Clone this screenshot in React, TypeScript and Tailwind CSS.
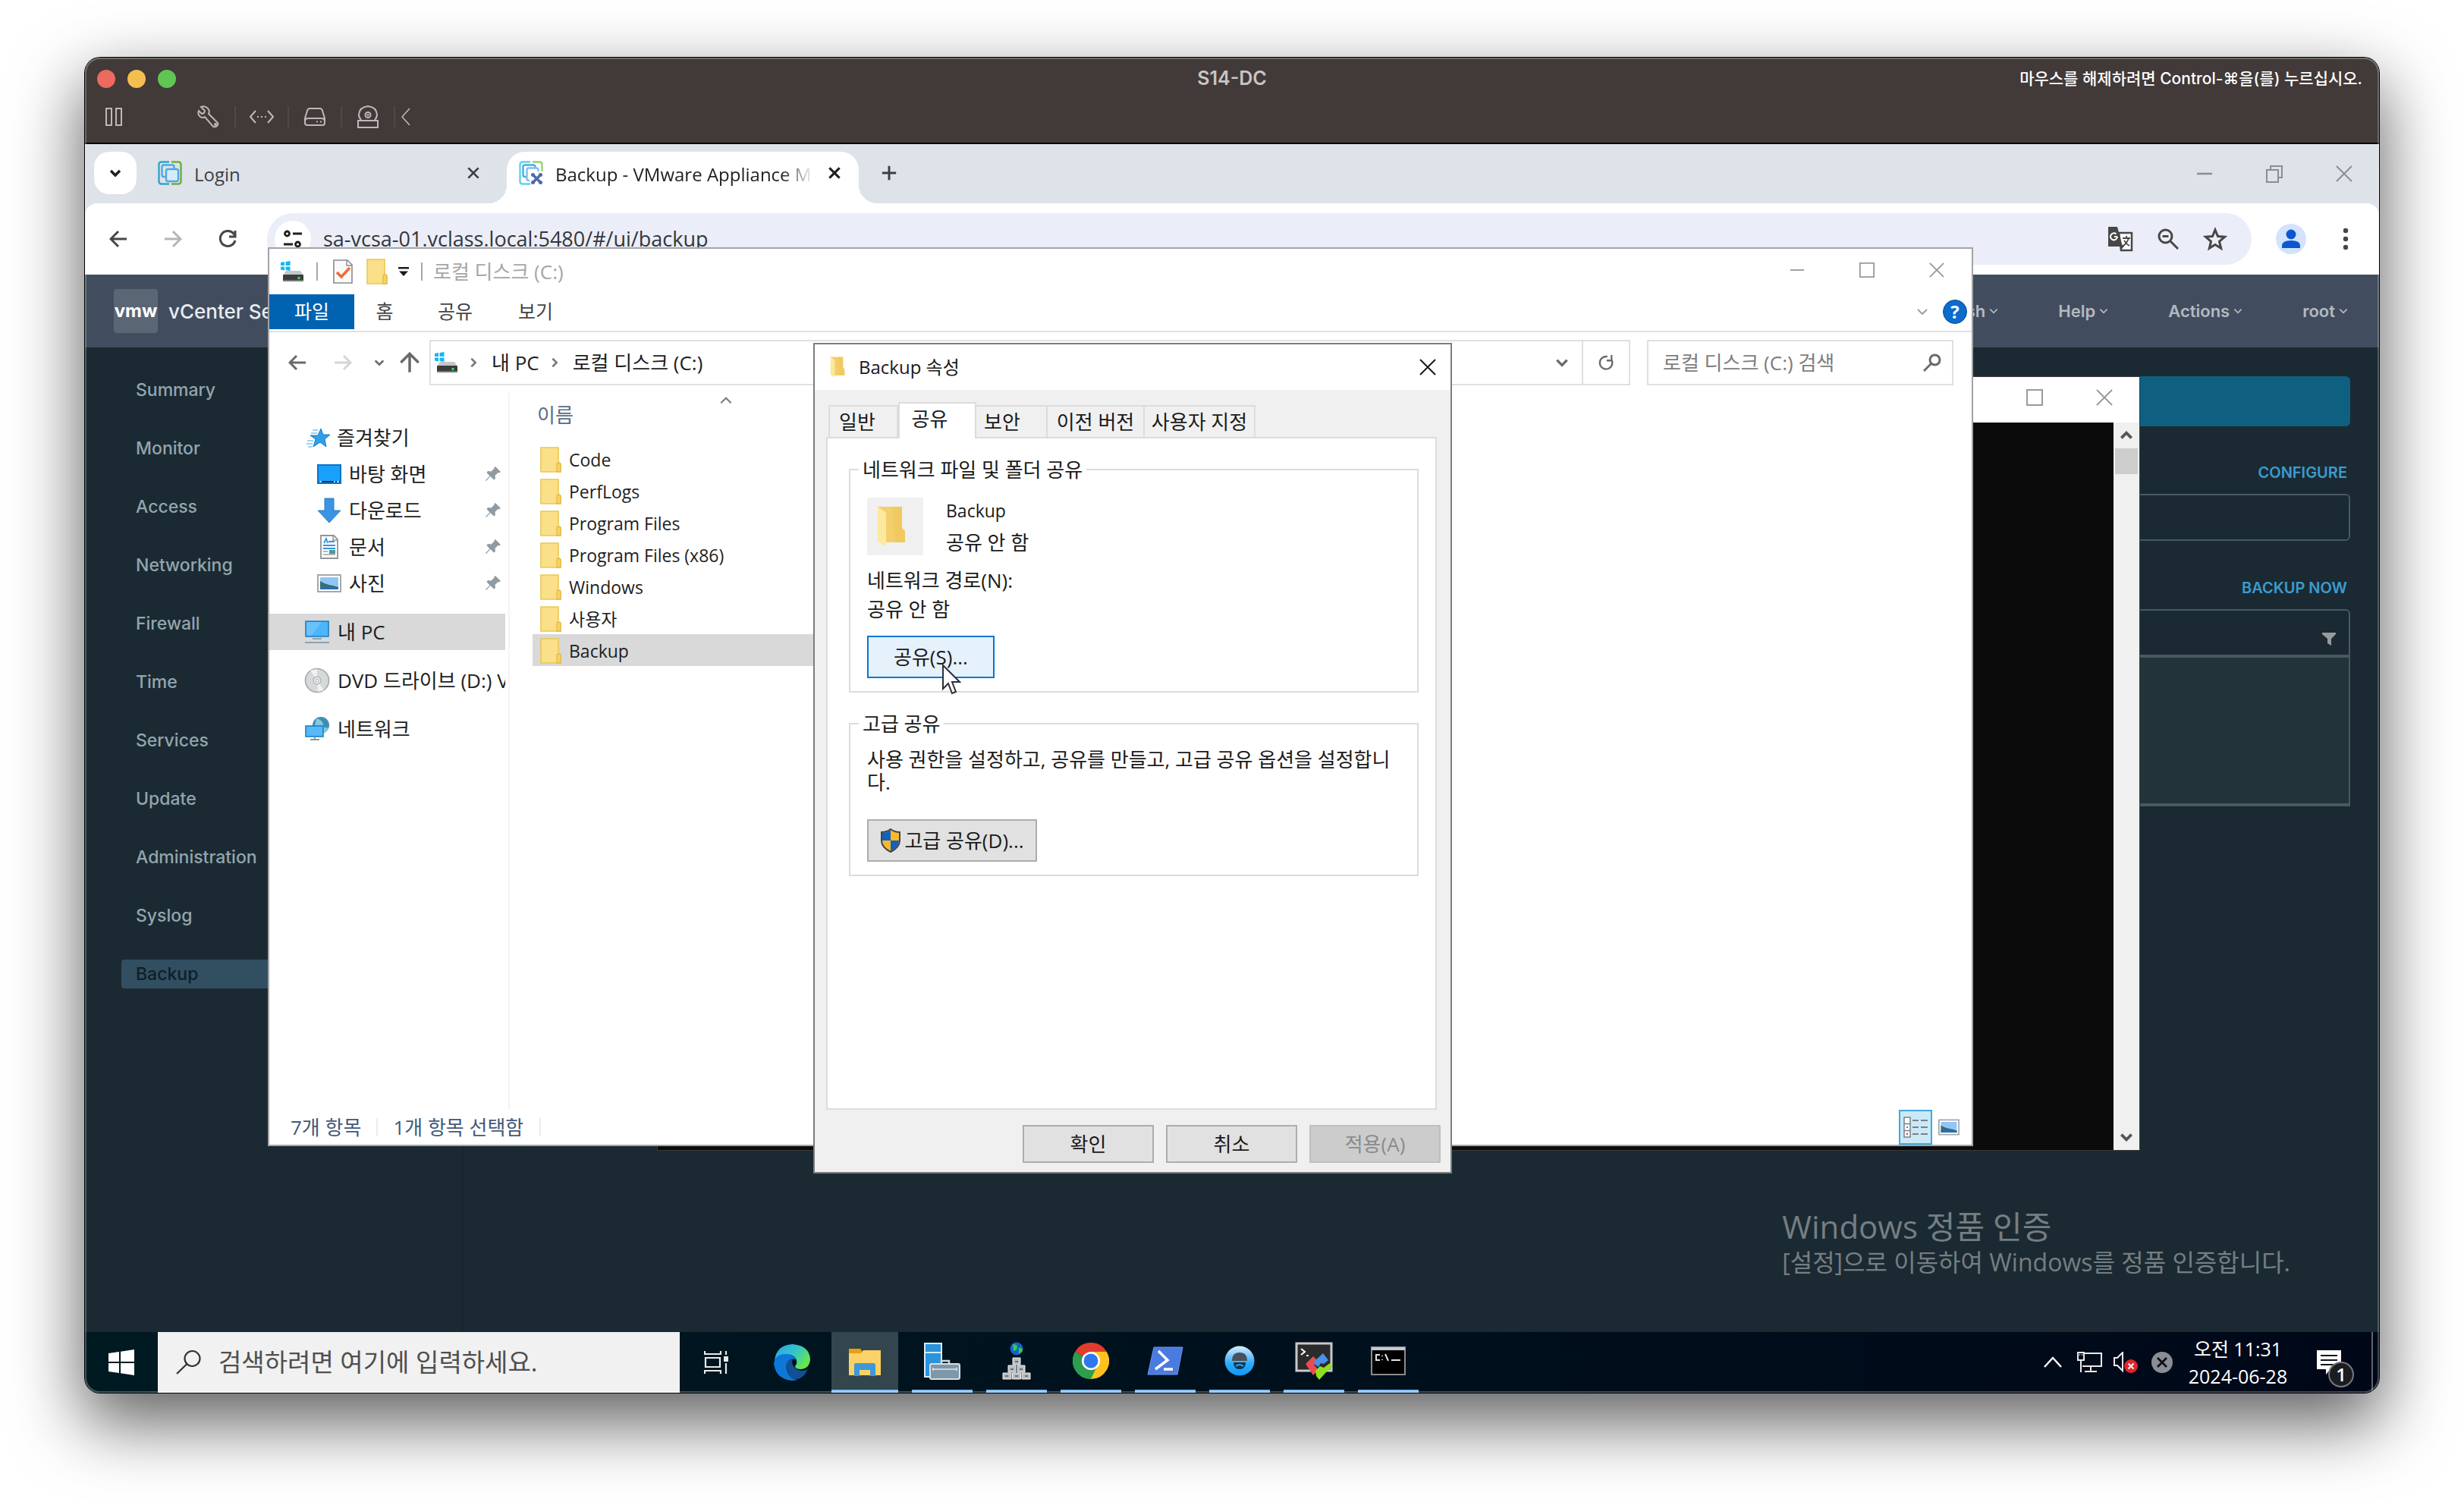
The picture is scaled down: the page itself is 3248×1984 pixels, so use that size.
import React from "react";
import type { ReactNode } from "react";

const UI = "font-['Open_Sans','Noto_Sans_CJK_KR',sans-serif]";
const CLARITY = "font-['Inter','Noto_Sans_CJK_KR',sans-serif]";

/* ---------- small line icons ---------- */

type LineProps = { d: string; size?: string; width?: number; className?: string; box?: string };

function Line({ d, size = "size-6", width = 2, className = "", box = "0 0 24 24" }: LineProps) {
  return (
    <svg
      viewBox={box}
      className={`${size} shrink-0 ${className}`}
      fill="none"
      stroke="currentColor"
      strokeWidth={width}
      aria-hidden="true"
    >
      <path d={d} />
    </svg>
  );
}

const CHEVRON_DOWN = "M4 8l8 8 8-8";
const CHEVRON_UP = "M4 16l8-8 8 8";
const CHEVRON_RIGHT = "M8 4l8 8-8 8";
const CROSS = "M2 2l20 20M22 2L2 22";
const SQUARE = "M2 2h20v20H2z";
const DASH = "M2 12h20";

/* ---------- coloured icons ---------- */

function FolderIcon({ className = "" }: { className?: string }) {
  return (
    <svg viewBox="0 0 28 34" className={`shrink-0 ${className}`} aria-hidden="true">
      <path d="M1 1h23v20l3 2v10H1z" fill="#fbe08a" stroke="#ecc850" strokeWidth="1.6" />
      <path d="M22 32V23.500q0-2.500 2.500-2.500t2.500 2.500V33h-5z" fill="#f7d367" stroke="#e5bb45" strokeWidth="1.400" />
    </svg>
  );
}

function OpenFolderIcon({ className = "" }: { className?: string }) {
  return (
    <svg viewBox="0 0 38 54" className={`shrink-0 ${className}`} aria-hidden="true">
      <path d="M1 1h32v28l4 4v15H10z" fill="#f3cf6b" />
      <path d="M20 1h13v28l4 4v15H24z" fill="#efc659" opacity=".6" />
      <path d="M1 1l10 7q1 1 1 3v36q0 6-2 6L1 46z" fill="#fde89f" />
    </svg>
  );
}

function DriveIcon() {
  return (
    <svg viewBox="0 0 32 28" className="h-7 w-8 shrink-0" aria-hidden="true">
      <path d="M1 2l5-1v5H1zM7.500 1l6-1v6h-6zM1 7.500h5v5l-5-1zM7.500 7.500h6V13l-6-1z" fill="#12b8f5" />
      <path d="M8 13h19l4 6H4z" fill="#c3c7ca" />
      <rect x="4" y="18" width="27" height="9" rx="1" fill="#3a3d3f" />
      <rect x="4" y="25" width="27" height="2" fill="#77797b" />
      <circle cx="25" cy="22.500" r="1.800" fill="#35e04a" />
    </svg>
  );
}

function CheckDocIcon() {
  return (
    <svg viewBox="0 0 26 32" className="h-8 w-[26px] shrink-0" aria-hidden="true">
      <path d="M1 1h18l6 6v24H1z" fill="#fafafa" stroke="#8b8b8b" strokeWidth="1.600" />
      <path d="M18 1v7h7" fill="none" stroke="#8b8b8b" strokeWidth="1.400" />
      <path d="M5 17l6 6L22 11" fill="none" stroke="#f26b2c" strokeWidth="3.500" />
    </svg>
  );
}

function StarQuickIcon() {
  return (
    <svg viewBox="0 0 32 28" className="h-7 w-8 shrink-0" aria-hidden="true">
      <path d="M19 2l3 8h9l-7 6 2 10-8-6-9 6 3-10-7-5h10z" fill="#2f9fe8" stroke="#1c7fc4" strokeWidth="1" />
      <path d="M8 4h7M6 8h8M1 18h8M0 22h8M2 26h6" stroke="#7cc8f5" strokeWidth="1.600" />
    </svg>
  );
}

function DesktopIcon() {
  return (
    <svg viewBox="0 0 32 26" className="h-[26px] w-8 shrink-0" aria-hidden="true">
      <rect x="1" y="1" width="30" height="24" fill="#19a0fb" stroke="#0b74c4" strokeWidth="2" />
      <path d="M2 23h28" stroke="#0a3f75" strokeWidth="2" />
      <path d="M3 23h3M22 23h2M26 23h3" stroke="#fff" strokeWidth="1.500" />
    </svg>
  );
}

function DownloadIcon() {
  return (
    <svg viewBox="0 0 32 34" className="h-[34px] w-8 shrink-0" aria-hidden="true">
      <path d="M10 1h12v16h9L16 33 1 17h9z" fill="#3a94e0" stroke="#2a7fca" strokeWidth="1" />
    </svg>
  );
}

function DocumentIcon() {
  return (
    <svg viewBox="0 0 32 32" className="size-8 shrink-0" aria-hidden="true">
      <path d="M5 1h17l5 5v25H5z" fill="#fff" stroke="#8f9599" strokeWidth="1.800" />
      <path d="M21 1v6h6" fill="none" stroke="#8f9599" strokeWidth="1.500" />
      <path d="M9 11l3-6 2 6M15 9h8M8 14h16M8 18h16" fill="none" stroke="#2c95dd" strokeWidth="1.800" />
      <path d="M8 22h6M8 26h16" stroke="#9aa0a4" strokeWidth="1.500" />
      <rect x="16" y="20" width="8" height="5" fill="#4b9a90" />
    </svg>
  );
}

function PictureIcon({ className = "h-6 w-8" }: { className?: string }) {
  return (
    <svg viewBox="0 0 32 24" className={`${className} shrink-0`} aria-hidden="true">
      <rect x="1" y="1" width="30" height="22" fill="#fff" stroke="#a4a8ab" strokeWidth="2" />
      <rect x="4" y="4" width="24" height="16" fill="#8fc6f7" />
      <path d="M4 9q6 4 12 5t12 3v3H4z" fill="#35706d" />
      <path d="M4 17q10-2 24 1v2H4z" fill="#2d6cb2" />
    </svg>
  );
}

function ComputerIcon() {
  return (
    <svg viewBox="0 0 34 32" className="h-8 w-[34px] shrink-0" aria-hidden="true">
      <rect x="2" y="2" width="30" height="20" fill="#4cb5fb" stroke="#1f7fc0" strokeWidth="1.600" />
      <path d="M3 3h20L9 21H3z" fill="#7fcbff" opacity=".6" />
      <path d="M11 25h12M1 30h32" stroke="#8aa3b6" strokeWidth="1.800" />
    </svg>
  );
}

function DiscIcon() {
  return (
    <svg viewBox="0 0 34 34" className="size-[34px] shrink-0" aria-hidden="true">
      <circle cx="17" cy="17" r="15.500" fill="#d6d9d9" stroke="#a3a7a7" strokeWidth="1.600" />
      <path d="M17 17L8 4l9-2zM17 17l9 13-8 2z" fill="#eff1f1" />
      <circle cx="17" cy="17" r="5" fill="#e9ebeb" stroke="#b4b8b8" strokeWidth="1.400" />
      <circle cx="17" cy="17" r="2" fill="#fff" stroke="#a9adad" />
    </svg>
  );
}

function NetworkIcon() {
  return (
    <svg viewBox="0 0 34 34" className="size-[34px] shrink-0" aria-hidden="true">
      <circle cx="22" cy="12" r="11" fill="#3f8fb5" />
      <path d="M16 3q8 2 9 8t7 4q-2 7-9 8-4-8-9-10z" fill="#86c8e0" />
      <rect x="2" y="13" width="23" height="14" fill="#55b9fa" stroke="#1f7fc0" strokeWidth="1.600" />
      <path d="M8 31h12M14 27v4" stroke="#7f99ac" strokeWidth="1.800" />
    </svg>
  );
}

function PinIcon() {
  return (
    <svg viewBox="0 0 22 22" className="size-[22px] shrink-0" aria-hidden="true">
      <path d="M14 1l7 7-2 1.500-1.500-.5-4 4 .5 4-2 1.500-4.500-4.500L2 20l-1-1 5.500-5.500L2.500 9 4 7l4.500.500 4-4L12.500 2z" fill="#8f9ba3" />
    </svg>
  );
}

function VmwareIcon({ tool = false }: { tool?: boolean }) {
  return (
    <svg viewBox="0 0 32 32" className="size-8 shrink-0" fill="none" strokeWidth="2.400" aria-hidden="true">
      <path d="M15 1.500H5Q1.500 1.500 1.500 5v22q0 3.500 3.500 3.500h10" stroke={tool ? "#5fd3e8" : "#2fa8c4"} />
      <path
        d={tool ? "M18 1.500h9q3.500 0 3.500 3.500v9" : "M18 1.500h9q3.500 0 3.500 3.500v22q0 3.500-3.500 3.500h-9"}
        stroke={tool ? "#9ad36a" : "#6fae3c"}
      />
      <path d="M10 21H8q-2.500 0-2.500-2.500V8Q5.500 5.500 8 5.500h11q2.500 0 2.500 2.500v2" stroke="#4da9e6" />
      {tool ? (
        <>
          <path d="M14 26h-1q-2.500 0-2.500-2.500V12q0-2.500 2.500-2.500h10q2.500 0 2.500 2.500v2" stroke="#7cc0ee" />
          <path d="M18 18l11 11M29 18L18 29" stroke="#4d68ac" strokeWidth="3.500" />
          <circle cx="18.500" cy="18.500" r="2.500" fill="#4d68ac" />
          <circle cx="28.500" cy="28.500" r="2.500" fill="#4d68ac" />
          <circle cx="28.500" cy="18.500" r="2.500" fill="#4d68ac" />
          <circle cx="18.500" cy="28.500" r="2.500" fill="#4d68ac" />
        </>
      ) : (
        <rect x="11" y="11" width="16" height="16" rx="2.500" stroke="#4da9e6" fill="#d9ebf7" />
      )}
    </svg>
  );
}

function ShieldIcon() {
  return (
    <svg viewBox="0 0 28 32" className="h-8 w-7 shrink-0" aria-hidden="true">
      <path d="M14 1q5 4 12 4v11q0 9-12 15Q2 25 2 16V5q7 0 12-4z" fill="#fcb827" stroke="#40464c" strokeWidth="2" />
      <path d="M14 2q-5 4-11 4v10h11z" fill="#0f62c0" />
      <path d="M14 16h11q0 8-11 14z" fill="#0f62c0" />
    </svg>
  );
}

/* ---------- host window title bar ---------- */

function HostTool({ label, children }: { label: string; children: ReactNode }) {
  return (
    <button aria-label={label} className="flex h-7 w-[70px] items-center justify-center border-r-2 border-[#4e4847]">
      {children}
    </button>
  );
}

function HostTitleBar() {
  return (
    <header className="flex h-[114px] shrink-0 flex-col border-b-2 border-black bg-[#413a39] font-['Inter','Noto_Sans_CJK_KR',sans-serif] text-[#bdb8b7]">
      <div className="grid h-14 grid-cols-3 items-center pr-[22px] pl-4">
        <div className="flex gap-4">
          <button aria-label="닫기" className="size-6 rounded-full bg-[#ec6a5e]" />
          <button aria-label="최소화" className="size-6 rounded-full bg-[#f4bf4f]" />
          <button aria-label="확대" className="size-6 rounded-full bg-[#61c554]" />
        </div>
        <h1 className="pl-1.5 text-center text-[25px] font-semibold text-[#c9c5c4]">S14-DC</h1>
        <p className="text-right text-[21px] font-medium whitespace-nowrap text-white">
          마우스를 해제하려면 Control-⌘을(를) 누르십시오.
        </p>
      </div>
      <div className="flex h-11 items-center pl-[26px]">
        <button aria-label="일시 정지" className="mr-[79px]">
          <Line size="size-6" box="0 0 24 24" d="M2 1h7v22H2zM15 1h7v22h-7z" width={2} />
        </button>
        <HostTool label="설정">
          <svg viewBox="0 0 30 30" className="size-[30px]" fill="none" stroke="currentColor" strokeWidth="2" aria-hidden="true">
            <path d="M5 2l5 5-1 3-3 1-4-4q-2 5 2 8 3 2 6 0l11 13q3 1 5-1t1-4L15 11q2-4-1-7Q10 0 5 2z" />
            <circle cx="24" cy="25" r="1" />
          </svg>
        </HostTool>
        <HostTool label="네트워크">
          <Line size="h-5 w-8" box="0 0 32 20" d="M8 2L1 10l7 8M24 2l7 8-7 8M10 10h2M15 10h2M20 10h2" width={2} />
        </HostTool>
        <HostTool label="하드 디스크">
          <svg viewBox="0 0 28 24" className="h-6 w-7" fill="none" stroke="currentColor" strokeWidth="2" aria-hidden="true">
            <path d="M7 1h14q2 0 3 3l3 10v6q0 3-3 3H4q-3 0-3-3v-6L4 4q1-3 3-3zM1 17q1-3 4-3h18q3 0 4 3M16 18.500h2M21 18.500h2" />
          </svg>
        </HostTool>
        <HostTool label="카메라">
          <svg viewBox="0 0 28 30" className="h-[30px] w-7" fill="none" stroke="currentColor" strokeWidth="2" aria-hidden="true">
            <path d="M5 19Q2 16 2 12 3 2 14 1q11 1 12 11 0 4-3 7M1 20h26v9H1z" />
            <circle cx="14" cy="12.500" r="3.500" />
            <circle cx="14" cy="12.500" r=".6" />
          </svg>
        </HostTool>
        <button aria-label="접기" className="ml-2">
          <Line size="h-6 w-3" box="0 0 12 24" d="M11 1L1 12l10 11" width={1.6} />
        </button>
      </div>
    </header>
  );
}

/* ---------- browser ---------- */

function CaptionButton({ label, children }: { label: string; children: ReactNode }) {
  return (
    <button aria-label={label} className="flex h-full w-[92px] items-center justify-center">
      {children}
    </button>
  );
}

function TabStrip() {
  return (
    <div className="flex h-[78px] shrink-0 items-end bg-[#dee2e9] pl-3 text-[#3c4043]">
      <button aria-label="탭 검색" className="mb-3 flex size-14 items-center justify-center rounded-[20px] bg-white">
        <Line d={CHEVRON_DOWN} size="size-[18px]" width={4.5} className="text-[#1f1f1f]" />
      </button>
      <div className="mb-3 ml-7 flex h-14 w-[460px] items-center gap-4 pr-9">
        <VmwareIcon />
        <span className="flex-1 pt-1 text-2xl">Login</span>
        <button aria-label="탭 닫기">
          <Line d={CROSS} size="size-4" width={4} />
        </button>
      </div>
      <div className="relative flex h-[68px] w-[464px] items-center gap-4 rounded-t-[24px] bg-white pr-6 pb-3 pl-4">
        <span className="absolute bottom-0 -left-6 size-6 bg-[radial-gradient(circle_at_0_0,#dee2e9_24px,#fff_24px)]" />
        <span className="absolute -right-6 bottom-0 size-6 bg-[radial-gradient(circle_at_100%_0,#dee2e9_24px,#fff_24px)]" />
        <VmwareIcon tool />
        <span className="flex-1 overflow-hidden [mask-image:linear-gradient(to_right,black_88%,transparent)] pt-1 text-2xl whitespace-nowrap text-[#1f1f1f]">
          Backup - VMware Appliance M
        </span>
        <button aria-label="탭 닫기" className="ml-1">
          <Line d={CROSS} size="size-4" width={4.5} className="text-[#1f1f1f]" />
        </button>
      </div>
      <button aria-label="새 탭" className="mb-3 ml-[30px] flex h-14 items-center">
        <Line d="M12 1v22M1 12h22" size="size-5" width={3.5} />
      </button>
      <div className="ml-auto flex h-full text-[#8a8f95]">
        <CaptionButton label="최소화">
          <Line d={DASH} size="size-6" width={2.5} />
        </CaptionButton>
        <CaptionButton label="이전 크기로">
          <Line d="M2 7h15v16H2zM7 7V2h15v15h-5" size="size-6" width={2} />
        </CaptionButton>
        <CaptionButton label="닫기">
          <Line d={CROSS} size="size-6" width={2} />
        </CaptionButton>
      </div>
    </div>
  );
}

function BrowserToolbar() {
  return (
    <div className="bg-[#dee2e9]">
      <div className="flex h-[94px] items-center rounded-t-[16px] bg-white pr-6 pl-8 text-[#474747]">
        <button aria-label="뒤로">
          <Line d="M23 12H2M12 2L2 12l10 10" size="size-6" width={3} />
        </button>
        <button aria-label="앞으로" className="ml-12 text-[#b5b5b5]">
          <Line d="M1 12h21M12 2l10 10-10 10" size="size-6" width={3} />
        </button>
        <button aria-label="새로고침" className="ml-12">
          <Line d="M22 14a10 10 0 1 1-2-9l2 3M22 1v8h-8" size="size-6" width={3} />
        </button>
        <div className="ml-[40px] flex h-[68px] flex-1 items-center rounded-full bg-[#ebeef8] pr-8 pl-2.5">
          <button aria-label="사이트 정보" className="flex size-12 items-center justify-center rounded-full bg-white text-[#1f1f1f]">
            <svg viewBox="0 0 24 24" className="size-6" fill="none" stroke="currentColor" strokeWidth="2.800" aria-hidden="true">
              <circle cx="4.500" cy="5" r="3" />
              <circle cx="18.500" cy="19" r="3" />
              <path d="M12 5h12M0 19h12" />
            </svg>
          </button>
          <input
            aria-label="주소창"
            defaultValue="sa-vcsa-01.vclass.local:5480/#/ui/backup"
            className="ml-4 min-w-0 flex-1 bg-transparent text-[27px] text-[#33363b] outline-none"
          />
          <div className="flex items-center gap-8">
            <button aria-label="번역">
              <svg viewBox="0 0 34 34" className="size-[34px]" aria-hidden="true">
                <path d="M15 9h17v23H18z" fill="#fff" stroke="#474747" strokeWidth="2.500" />
                <path d="M1 1h12l7 26H1z" fill="#474747" />
                <path d="M18 25l-1 8 6-8z" fill="#474747" />
                <path d="M13 14h-4M13 14a4.500 4.500 0 1 1-1.500-3.500" stroke="#fff" strokeWidth="2" fill="none" />
                <path d="M20 16h10M25 13v3M28 16q-2 6-7 10M22 19q3 5 7 7" stroke="#474747" strokeWidth="1.800" fill="none" />
              </svg>
            </button>
            <button aria-label="확대/축소">
              <svg viewBox="0 0 28 28" className="size-7" fill="none" stroke="currentColor" strokeWidth="3" aria-hidden="true">
                <circle cx="10.500" cy="10.500" r="8.500" />
                <path d="M16.500 16.500L27 27M6.500 10.500h8" />
              </svg>
            </button>
            <button aria-label="북마크">
              <svg viewBox="0 0 32 32" className="size-8" fill="none" stroke="currentColor" strokeWidth="3" aria-hidden="true">
                <path d="M16 4l3.500 8.500 9 .8-7 6 2.200 9-7.700-4.800-7.700 4.800 2.200-9-7-6 9-.8z" />
              </svg>
            </button>
          </div>
        </div>
        <button aria-label="프로필" className="ml-8 size-10 rounded-full bg-[#d3e3fd]">
          <svg viewBox="0 0 40 40" className="size-10" fill="#0b57d0" aria-hidden="true">
            <circle cx="20" cy="14" r="6.500" />
            <path d="M8 32v-3q0-7 12-7t12 7v3z" />
          </svg>
        </button>
        <button aria-label="메뉴" className="ml-8">
          <svg viewBox="0 0 40 32" className="h-8 w-10" fill="currentColor" aria-hidden="true">
            <circle cx="20" cy="5" r="3.200" />
            <circle cx="20" cy="16" r="3.200" />
            <circle cx="20" cy="27" r="3.200" />
          </svg>
        </button>
      </div>
    </div>
  );
}

const NAV = [
  "Summary",
  "Monitor",
  "Access",
  "Networking",
  "Firewall",
  "Time",
  "Services",
  "Update",
  "Administration",
  "Syslog",
  "Backup",
];

function HeaderMenu({ label }: { label: string }) {
  return (
    <button className="flex items-center gap-1">
      {label}
      <Line d={CHEVRON_DOWN} size="size-3.5" width={3} />
    </button>
  );
}

function VCenterPage() {
  return (
    <div className={`flex min-h-0 flex-1 flex-col bg-[#1b2a32] ${CLARITY}`}>
      <div className="flex h-24 shrink-0 items-center bg-[#414d5e] pr-10 pl-[38px]">
        <span className="flex size-[58px] items-center justify-center rounded bg-[#5b6675] text-2xl font-bold text-white">
          vmw
        </span>
        <span className="ml-3.5 text-[26px] font-medium text-[#e8ecf0]">vCenter Server</span>
        <nav className="ml-auto flex gap-[78px] text-[22px] font-semibold text-[#b3b9c1]">
          <HeaderMenu label="English" />
          <HeaderMenu label="Help" />
          <HeaderMenu label="Actions" />
          <HeaderMenu label="root" />
        </nav>
      </div>
      <div className="flex min-h-0 flex-1">
        <nav className="w-[499px] shrink-0 border-r-2 border-[#17242b] pt-[37px] pl-12">
          <ul className="flex flex-col gap-[39px]">
            {NAV.map((item) => (
              <li key={item}>
                <a
                  href={`#${item.toLowerCase()}`}
                  className={
                    item === "Backup"
                      ? "flex h-[38px] items-center rounded-l bg-[#324f61] pl-[19px] text-[23px] font-medium text-[#0f1e28]"
                      : "flex h-[38px] items-center pl-[19px] text-[23px] font-medium text-[#93a5af]"
                  }
                >
                  {item}
                </a>
              </li>
            ))}
          </ul>
        </nav>
        <main className="flex-1 pt-[38px] pr-[38px] pl-9">
          <div className="h-[66px] rounded-md bg-[#0f5f80]" />
          <div className="mt-[45px] flex justify-end pr-1">
            <button className="text-[20px] leading-8 font-semibold text-[#3b9bd1]">CONFIGURE</button>
          </div>
          <div className="mt-3 h-[62px] rounded-md border-2 border-[#485962]" />
          <div className="mt-[46px] flex justify-end pr-1">
            <button className="text-[20px] leading-8 font-semibold text-[#3b9bd1]">BACKUP NOW</button>
          </div>
          <div className="mt-3 rounded-t-md border-2 border-b-4 border-[#485962]">
            <div className="flex h-[62px] items-center justify-end border-b-4 border-[#485962] pt-4 pr-[17px]">
              <svg viewBox="0 0 18 17" className="h-[17px] w-[18px]" fill="#9a9a9a" aria-hidden="true">
                <path d="M0 0h18v2l-6 6v9l-5-3V8L0 2z" />
              </svg>
            </div>
            <div className="h-[192px] bg-[#22333a]" />
          </div>
        </main>
      </div>
    </div>
  );
}

/* ---------- command prompt window ---------- */

function ConsoleWindow() {
  return (
    <section
      aria-label="명령 프롬프트"
      className="absolute top-[306px] left-[754px] flex h-[1021px] w-[1955px] flex-col border border-[#3a3a3a] bg-[#0b0b0b]"
    >
      <div className="flex h-[60px] shrink-0 justify-end bg-white pb-1.5 text-[#9a9a9a]">
        <CaptionButton label="최소화">
          <Line d={DASH} size="size-6" width={2} />
        </CaptionButton>
        <CaptionButton label="최대화">
          <Line d={SQUARE} size="size-6" width={2} />
        </CaptionButton>
        <CaptionButton label="닫기">
          <Line d={CROSS} size="size-6" width={2} />
        </CaptionButton>
      </div>
      <div className="flex min-h-0 flex-1 justify-end">
        <div className="flex w-[34px] flex-col items-center justify-between bg-[#f0f0f0] text-[#555]">
          <div className="flex flex-col items-center">
            <span className="flex h-[34px] items-center">
              <Line d={CHEVRON_UP} size="size-5" width={4.5} />
            </span>
            <span className="h-[34px] w-[30px] bg-[#cdcdcd]" />
          </div>
          <span className="flex h-[34px] items-center">
            <Line d={CHEVRON_DOWN} size="size-5" width={4.5} />
          </span>
        </div>
      </div>
    </section>
  );
}

/* ---------- file explorer ---------- */

type Place = { label: string; icon: ReactNode };

const PINNED: Place[] = [
  { label: "바탕 화면", icon: <DesktopIcon /> },
  { label: "다운로드", icon: <DownloadIcon /> },
  { label: "문서", icon: <DocumentIcon /> },
  { label: "사진", icon: <PictureIcon /> },
];

const FILES = ["Code", "PerfLogs", "Program Files", "Program Files (x86)", "Windows", "사용자", "Backup"];

function ExplorerWindow() {
  return (
    <section
      aria-label="로컬 디스크 (C:)"
      className="absolute top-[136px] left-[241px] flex h-[1185px] w-[2248px] flex-col border-2 border-[#a3a3a6] bg-white text-[26px] text-[#1e1e1e]"
    >
      <div className="flex h-[60px] shrink-0 items-center pl-3.5">
        <DriveIcon />
        <span className="ml-4 h-6 w-0.5 bg-[#a8a8a8]" />
        <span className="ml-5">
          <CheckDocIcon />
        </span>
        <FolderIcon className="ml-[18px] h-[34px] w-7" />
        <svg viewBox="0 0 14 14" className="ml-3.5 size-3.5" fill="#1b1b1b" aria-hidden="true">
          <path d="M0 1h14v2.500H0zM1 6.500h12L7 13z" />
        </svg>
        <span className="ml-4 h-6 w-0.5 bg-[#a8a8a8]" />
        <h2 className="ml-3.5 text-[#a6a6a6]">로컬 디스크 (C:)</h2>
        <div className="ml-auto flex h-full pb-1 text-[#9a9a9a]">
          <CaptionButton label="최소화">
            <Line d={DASH} size="size-[22px]" width={2} />
          </CaptionButton>
          <CaptionButton label="최대화">
            <Line d={SQUARE} size="size-[22px]" width={2} />
          </CaptionButton>
          <CaptionButton label="닫기">
            <Line d={CROSS} size="size-[22px]" width={2} />
          </CaptionButton>
        </div>
      </div>

      <div className="flex h-[50px] shrink-0 items-start border-b-2 border-[#e0e0e0] text-[25px] text-[#444]">
        <button className="h-[46px] w-[112px] bg-[#0063b1] text-white">파일</button>
        <button className="h-[46px] w-[80px]">홈</button>
        <button className="h-[46px] w-[106px]">공유</button>
        <button className="h-[46px] w-[106px]">보기</button>
        <div className="ml-auto flex h-[46px] items-center gap-[18px] pr-1.5">
          <Line d={CHEVRON_DOWN} size="size-[18px]" width={2.5} className="text-[#9a9a9a]" />
          <button
            aria-label="도움말"
            className="flex size-8 items-center justify-center rounded-full border border-[#0a4a8a] bg-[#0b6ccd] text-2xl leading-none font-bold text-white"
          >
            ?
          </button>
        </div>
      </div>

      <div className="flex h-20 shrink-0 items-center pr-6 pl-[25px] text-[#6a6a6a]">
        <button aria-label="뒤로">
          <Line d="M23 12H2M11 3l-9 9 9 9" size="size-6" width={3} />
        </button>
        <button aria-label="앞으로" className="ml-9 text-[#d5d5d5]">
          <Line d="M1 12h21M13 3l9 9-9 9" size="size-6" width={3} />
        </button>
        <button aria-label="최근 위치" className="ml-7">
          <Line d={CHEVRON_DOWN} size="size-4" width={4} />
        </button>
        <button aria-label="위로" className="ml-[18px]">
          <Line d="M12 23V2M2 12L12 2l10 10" size="size-7" width={3} />
        </button>
        <div className="ml-3 flex h-[60px] flex-1 items-center border-2 border-[#e0e0e0] pl-1 text-[#1e1e1e]">
          <DriveIcon />
          <Line d={CHEVRON_RIGHT} size="ml-3 size-4" width={4} className="text-[#7a7a7a]" />
          <button className="ml-4">내 PC</button>
          <Line d={CHEVRON_RIGHT} size="ml-3 size-4" width={4} className="text-[#7a7a7a]" />
          <button className="ml-4">로컬 디스크 (C:)</button>
          <div className="ml-auto flex h-full items-center text-[#6a6a6a]">
            <Line d={CHEVRON_DOWN} size="mr-4 size-5" width={4} />
            <button aria-label="새로 고침" className="flex h-full w-[62px] items-center justify-center border-l-2 border-[#e0e0e0]">
              <Line d="M20 8a9 9 0 1 1-6-4.500M20 1v8h-7" size="size-[22px]" width={2.5} />
            </button>
          </div>
        </div>
        <label className="ml-[22px] flex h-[60px] w-[404px] items-center border-2 border-[#e0e0e0] pr-3.5 pl-[19px]">
          <input
            aria-label="로컬 디스크 (C:) 검색"
            placeholder="로컬 디스크 (C:) 검색"
            className="min-w-0 flex-1 outline-none placeholder:text-[#7d7d7d]"
          />
          <svg viewBox="0 0 24 24" className="size-6" fill="none" stroke="currentColor" strokeWidth="3" aria-hidden="true">
            <circle cx="15.500" cy="8.500" r="6.500" />
            <path d="M10.500 13.500L1 23" />
          </svg>
        </label>
      </div>

      <div className="flex min-h-0 flex-1">
        <nav className="flex w-[317px] shrink-0 flex-col gap-4 border-r-2 border-[#f3f3f3] pt-[35px] pr-1">
          <ul>
            <li className="flex h-12 items-center gap-2 pl-[49px]">
              <StarQuickIcon />
              즐겨찾기
            </li>
            {PINNED.map((place) => (
              <li key={place.label} className="flex h-12 items-center gap-2.5 pr-[5px] pl-[63px]">
                {place.icon}
                <span className="flex-1">{place.label}</span>
                <PinIcon />
              </li>
            ))}
          </ul>
          <div className="flex h-12 items-center gap-2.5 bg-[#d9d9d9] pl-[46px]">
            <ComputerIcon />내 PC
          </div>
          <div className="flex h-12 items-center gap-2.5 overflow-hidden pl-[46px] whitespace-nowrap">
            <DiscIcon />
            <span>DVD 드라이브 (D:) V</span>
          </div>
          <div className="flex h-12 items-center gap-2.5 pl-[46px]">
            <NetworkIcon />
            네트워크
          </div>
        </nav>
        <div className="relative pl-[30px]">
          <Line d={CHEVRON_UP} size="size-5" width={2.5} className="absolute top-0 left-[275px] text-[#7a7a7a]" />
          <table className="w-[900px] border-collapse text-left text-[23px]">
            <thead>
              <tr>
                <th className="h-[66px] pb-2 pl-[6px] text-[26px] font-normal text-[#5b6b86]">이름</th>
              </tr>
            </thead>
            <tbody>
              {FILES.map((name) => (
                <tr key={name} className={name === "Backup" ? "bg-[#d9d9d9]" : ""}>
                  <td className="h-[42px] p-0">
                    <span className="flex items-center gap-2.5 pt-0.5 pl-[10px]">
                      <FolderIcon className="h-[34px] w-7" />
                      {name}
                    </span>
                  </td>
                </tr>
              ))}
            </tbody>
          </table>
        </div>
      </div>

      <footer className="flex h-[46px] shrink-0 items-center pr-4 pl-7 text-[#42587a]">
        <span>7개 항목</span>
        <span className="mx-5 h-6 w-0.5 bg-[#ececec]" />
        <span>1개 항목 선택함</span>
        <span className="ml-[21px] h-6 w-0.5 bg-[#ececec]" />
        <div className="ml-auto flex items-center gap-2">
          <button
            aria-label="자세히"
            className="flex h-[46px] w-11 items-center justify-center border-2 border-[#3fa9de] bg-[#cbe8f6]"
          >
            <svg viewBox="0 0 34 28" className="h-7 w-[34px]" fill="none" stroke="#7a8186" strokeWidth="2" aria-hidden="true">
              <path d="M2 1h8v26H2zM2 9.500h8M2 18.500h8" fill="#fff" strokeWidth="1.500" />
              <path d="M13 5h8M24 5h9M13 14h8M24 14h9M13 23h8M24 23h9" />
              <path d="M5 14h2" stroke="#2c95dd" />
              <path d="M5 23h2" stroke="#d33" />
            </svg>
          </button>
          <button aria-label="큰 아이콘">
            <PictureIcon className="h-[22px] w-7" />
          </button>
        </div>
      </footer>
    </section>
  );
}

/* ---------- properties dialog ---------- */

const PUSH = "border-2 border-[#adadad] bg-[#e1e1e1]";

function PropertiesDialog() {
  return (
    <section
      role="dialog"
      aria-label="Backup 속성"
      className="absolute top-[262px] left-[960px] flex h-[1095px] w-[842px] flex-col border-2 border-[#7d7d7d] bg-[#f0f0f0] text-[26px] text-[#1a1a1a]"
    >
      <div className="flex h-[60px] shrink-0 items-center bg-white pr-[18px] pl-5">
        <OpenFolderIcon className="h-7 w-5" />
        <h2 className="ml-[18px] text-2xl">Backup 속성</h2>
        <button aria-label="닫기" className="ml-auto">
          <Line d={CROSS} size="size-6" width={2} />
        </button>
      </div>

      <div role="tablist" className="flex h-[62px] shrink-0 items-end px-[18px] leading-8">
        <button role="tab" className="h-[42px] w-[92px] border-2 border-b-0 border-[#dcdcdc] pr-4">
          일반
        </button>
        <button
          role="tab"
          aria-selected="true"
          className="relative z-10 -mb-0.5 h-12 w-[103px] border-2 border-b-0 border-[#dcdcdc] bg-white pr-5 pb-1.5"
        >
          공유
        </button>
        <button role="tab" className="h-[42px] w-[92px] border-t-2 border-[#dcdcdc] pr-6">
          보안
        </button>
        <button role="tab" className="h-[42px] w-32 border-t-2 border-l-2 border-[#dcdcdc]">
          이전 버전
        </button>
        <button role="tab" className="h-[42px] w-[148px] border-2 border-b-0 border-[#dcdcdc]">
          사용자 지정
        </button>
      </div>

      <div className="mr-[18px] ml-[15px] flex-1 border-2 border-[#dcdcdc] bg-white pt-[26px] pr-[22px] pl-7">
        <fieldset className="h-[309px] border-2 border-[#dcdcdc]">
          <legend className="ml-[11px] px-[5px] leading-[30px]">네트워크 파일 및 폴더 공유</legend>
          <div className="px-[22px] pt-[18px]">
            <div className="flex items-center">
              <span className="flex h-[76px] w-[74px] items-center justify-center bg-[#f0f0f0]">
                <OpenFolderIcon className="mr-2.5 h-[54px] w-[38px]" />
              </span>
              <div className="ml-[30px] leading-[42px]">
                <p className="text-[23px] leading-[42px]">Backup</p>
                <p>공유 안 함</p>
              </div>
            </div>
            <div className="mt-2.5 leading-[38px]">
              <p>네트워크 경로(N):</p>
              <p>공유 안 함</p>
            </div>
            <button className="mt-4 block h-14 w-[168px] border-2 border-[#0078d7] bg-[#e5f1fb]">공유(S)...</button>
          </div>
        </fieldset>

        <fieldset className="mt-[26px] h-[216px] border-2 border-[#dcdcdc]">
          <legend className="ml-[11px] px-[5px] leading-[30px]">고급 공유</legend>
          <div className="px-[22px] pt-[17px]">
            <p className="leading-[30px]">사용 권한을 설정하고, 공유를 만들고, 고급 공유 옵션을 설정합니다.</p>
            <button className={`mt-[34px] flex h-14 w-[224px] items-center justify-center gap-1 ${PUSH}`}>
              <ShieldIcon />
              고급 공유(D)...
            </button>
          </div>
        </fieldset>
      </div>

      <div className="flex h-[82px] shrink-0 items-end justify-end gap-4 pr-[13px] pb-3">
        <button className={`h-[50px] w-[173px] ${PUSH}`}>확인</button>
        <button className={`h-[50px] w-[173px] ${PUSH}`}>취소</button>
        <button disabled className="h-[50px] w-[173px] border-2 border-[#bfbfbf] bg-[#cccccc] text-[#8b8b8b]">
          적용(A)
        </button>
      </div>

      <svg viewBox="0 0 26 42" className="absolute top-[421px] left-[167px] h-[42px] w-[26px]" aria-hidden="true">
        <path d="M2 2v31l7-7 5 13 5-2-5-13h10z" fill="#fff" stroke="#2b2f3a" strokeWidth="2" />
      </svg>
    </section>
  );
}

/* ---------- taskbar ---------- */

function EdgeLogo() {
  return (
    <svg viewBox="0 0 48 48" className="size-12" aria-hidden="true">
      <defs>
        <linearGradient id="edgeTop" x1="0" y1="0" x2="1" y2=".6">
          <stop offset="0" stopColor="#2aa5e8" />
          <stop offset=".55" stopColor="#35c3c9" />
          <stop offset="1" stopColor="#66e84a" />
        </linearGradient>
      </defs>
      <path d="M1 22Q3 1 25 0q22 2 23 20-1 12-12 13-8 0-8-4 4-4 1-10-4-6-12-5Q5 14 1 22z" fill="url(#edgeTop)" />
      <path d="M0 25Q2 14 13 13q12-1 16 7-9-2-12 6-2 9 5 17 4 4 9 4-6 2-13 0Q2 43 0 25z" fill="#0c78d8" />
      <path d="M17 26q1-6 8-7-2 6 1 10 4 6 12 6 5 0 7-3-4 13-17 15-12-5-11-21z" fill="#124f97" />
    </svg>
  );
}

function ExplorerLogo() {
  return (
    <svg viewBox="0 0 44 38" className="h-[38px] w-11" aria-hidden="true">
      <path d="M1 1h15l3 4v5H1z" fill="#e8a10c" />
      <path d="M1 7h16l3-4h23v33H1z" fill="#fbd267" />
      <path d="M8 37V22q0-2 2-2h24q2 0 2 2v15h-7v-8H15v8z" fill="#3f98d8" />
    </svg>
  );
}

function ServerLogo() {
  return (
    <svg viewBox="0 0 50 50" className="size-[50px]" aria-hidden="true">
      <path d="M2 2h22v44H2z" fill="#2a93dd" stroke="#d8eaf6" strokeWidth="2" />
      <path d="M2 14h22" stroke="#d8eaf6" strokeWidth="2" />
      <path d="M24 29v-4h10v4" fill="none" stroke="#cfd8dd" strokeWidth="2.500" />
      <rect x="9" y="29" width="39" height="20" rx="2" fill="#7d98a8" stroke="#d9e0e4" strokeWidth="2" />
      <path d="M13 36h31M13 34v4M44 34v4" stroke="#dfe6ea" strokeWidth="1.500" />
    </svg>
  );
}

function ClusterLogo() {
  return (
    <svg viewBox="0 0 38 50" className="h-[50px] w-[38px]" aria-hidden="true">
      <circle cx="19" cy="9" r="8.500" fill="#1463c6" />
      <path d="M14 3q6 0 6 4t-5 5zM22 8q5-1 5 4l-5 4z" fill="#37c84a" />
      <g fill="#b9bcc0" stroke="#f0f1f2" strokeWidth="1">
        <path d="M14 21h10v9H14zM8 31h10v9H8zM20 31h10v9H20zM1 41h11v8H1zM13.500 41h11v8h-11zM26 41h11v8H26z" />
      </g>
      <path d="M17 26h4M11 36h4M23 36h4M4 45h4M17 45h4M30 45h4" stroke="#6c6f73" strokeWidth="2" />
    </svg>
  );
}

function ChromeLogo() {
  return (
    <svg viewBox="0 0 48 48" className="size-12" aria-hidden="true">
      <path d="M24 24L3.200 12A24 24 0 0 1 44.800 12z" fill="#e33b2e" />
      <path d="M24 24L44.800 12A24 24 0 0 1 24 48z" fill="#fcc31e" />
      <path d="M24 24v24A24 24 0 0 1 3.200 12z" fill="#2d9e4f" />
      <path d="M24 12h20.800L35 29 24 48l9-19z" fill="#fcc31e" />
      <path d="M3.200 12L14 30l10 5 9-6-9 19A24 24 0 0 1 3.200 12z" fill="#2d9e4f" />
      <circle cx="24" cy="24" r="12" fill="#fff" />
      <circle cx="24" cy="24" r="9.500" fill="#2f77ee" />
    </svg>
  );
}

function PowerShellLogo() {
  return (
    <svg viewBox="0 0 48 38" className="h-[38px] w-12" aria-hidden="true">
      <path d="M9 1h38l-7 36H1z" fill="#4a7be0" stroke="#6f97ea" strokeWidth="1" />
      <path d="M15 6l12 12-16 12" fill="none" stroke="#fff" strokeWidth="3.500" />
      <path d="M22 30h12" stroke="#fff" strokeWidth="3.500" />
    </svg>
  );
}

function AgentLogo() {
  return (
    <svg viewBox="0 0 40 40" className="size-10" aria-hidden="true">
      <defs>
        <linearGradient id="agentFill" x1="0" y1="0" x2="0" y2="1">
          <stop offset="0" stopColor="#d8eefc" />
          <stop offset=".6" stopColor="#2aa9fb" />
          <stop offset="1" stopColor="#1199f5" />
        </linearGradient>
      </defs>
      <circle cx="20" cy="20" r="19.500" fill="url(#agentFill)" />
      <path d="M10 20q0-11 10-11t10 11z" fill="#4b5158" />
      <path d="M12 22h16q0 9-8 9t-8-9z" fill="#12364e" />
      <path d="M15 27q5-4 10 0" fill="none" stroke="#2aa9fb" strokeWidth="2" />
    </svg>
  );
}

function XtermLogo() {
  return (
    <svg viewBox="0 0 50 50" className="size-[50px]" aria-hidden="true">
      <rect x="2" y="2" width="46" height="36" fill="#2b2b2b" stroke="#c9c9c9" strokeWidth="3" />
      <path d="M8 9l5 4-5 4M15 18h3" stroke="#fff" strokeWidth="2" fill="none" />
      <path d="M14 29l10-10 5 5-4 6 6 7-7 7z" fill="#ea4c52" />
      <path d="M26 25l11-10 7 9-6 5-4-1-3 5-6-4z" fill="#4a90e8" />
      <path d="M27 38l6-6 5 2 8-6 3 5-8 7-9 10-4-5z" fill="#8fe01d" />
    </svg>
  );
}

function CmdLogo() {
  return (
    <svg viewBox="0 0 46 38" className="h-[38px] w-[46px]" aria-hidden="true">
      <rect x="1" y="1" width="44" height="36" fill="#000" stroke="#8b8b8f" strokeWidth="2" />
      <path d="M1 3h44" stroke="#c6c8cf" strokeWidth="4" />
      <path d="M12 11H7v7h5M15 12v1M15 17v1M19 10l4 9M27 18h12" stroke="#e4e4e4" strokeWidth="2" fill="none" />
    </svg>
  );
}

const APPS: { label: string; icon: ReactNode }[] = [
  { label: "서버 관리자", icon: <ServerLogo /> },
  { label: "DNS", icon: <ClusterLogo /> },
  { label: "Chrome", icon: <ChromeLogo /> },
  { label: "PowerShell", icon: <PowerShellLogo /> },
  { label: "에이전트", icon: <AgentLogo /> },
  { label: "터미널", icon: <XtermLogo /> },
  { label: "명령 프롬프트", icon: <CmdLogo /> },
];

function Taskbar() {
  return (
    <footer className="flex h-20 shrink-0 bg-linear-to-r from-[#001a22] to-[#000818] text-white">
      <button aria-label="시작" className="flex w-24 items-center justify-center">
        <svg viewBox="0 0 34 34" className="size-[34px]" fill="#fff" aria-hidden="true">
          <path d="M0 5l14-2v13H0zM16 2.700L34 0v16H16zM0 18h14v13L0 29zM16 18h18v16l-18-2.700z" />
        </svg>
      </button>
      <label className="flex w-[688px] items-center bg-[#f1f1f1] pl-6 text-[#4a4a4a]">
        <svg viewBox="0 0 34 32" className="h-8 w-[34px]" fill="none" stroke="#333" strokeWidth="2.200" aria-hidden="true">
          <circle cx="21.500" cy="11" r="10" />
          <path d="M14.500 18L1 31" />
        </svg>
        <input
          aria-label="검색"
          placeholder="검색하려면 여기에 입력하세요."
          className="ml-[22px] min-w-0 flex-1 text-[33px] outline-none placeholder:text-[#4f4f4f]"
        />
      </label>
      <button aria-label="작업 보기" className="flex w-24 items-center justify-center">
        <svg viewBox="0 0 32 32" className="size-8" fill="none" stroke="#e8eaec" strokeWidth="2.200" aria-hidden="true">
          <path d="M1 1v4h21V1M2 10h19v12H2zM1 31v-4h21v4M29 1v5M29 17v14" />
          <path d="M29 8v7" strokeWidth="6" />
        </svg>
      </button>
      <button aria-label="Edge" className="flex w-[104px] items-center justify-center">
        <EdgeLogo />
      </button>
      <button
        aria-label="파일 탐색기"
        className="mr-[9px] flex w-[88px] items-center justify-center border-b-4 border-[#85c1f5] bg-[#33464d] pt-1"
      >
        <ExplorerLogo />
      </button>
      {APPS.map((app) => (
        <button key={app.label} aria-label={app.label} className="flex w-[98px] justify-center">
          <span className="flex h-full w-20 items-center justify-center border-b-4 border-[#85c1f5]">{app.icon}</span>
        </button>
      ))}
      <div className="ml-auto flex items-center">
        <button aria-label="숨겨진 아이콘" className="flex w-12 justify-center">
          <Line d="M1 18L12 6l11 12" size="size-6" width={2.4} />
        </button>
        <span className="flex w-12 justify-center">
          <svg viewBox="0 0 34 28" className="h-7 w-[34px]" fill="none" stroke="#e8eaec" strokeWidth="2" aria-hidden="true">
            <path d="M11 2h22v17H8M2 1h8v10H2zM4 4h1M7 4h1M6 11v16M19 19v6M11 26h16" />
          </svg>
        </span>
        <span className="flex w-12 justify-center">
          <svg viewBox="0 0 32 28" className="h-7 w-8" fill="none" stroke="#e8eaec" strokeWidth="2" aria-hidden="true">
            <path d="M1 8h4l7-7v24l-7-7H1z" />
            <circle cx="23" cy="19" r="9" fill="#e0242b" stroke="none" />
            <path d="M19.500 15.500l7 7M26.500 15.500l-7 7" strokeWidth="2.400" />
          </svg>
        </span>
        <span className="flex w-12 justify-center">
          <svg viewBox="0 0 28 28" className="size-7" aria-hidden="true">
            <circle cx="14" cy="14" r="14" fill="#8a8d93" />
            <path d="M8 8l12 12M20 8L8 20" stroke="#0b0f18" strokeWidth="2.800" />
          </svg>
        </span>
        <button className="w-[152px] text-center text-[25px] leading-9">
          <span className="block">오전 11:31</span>
          <span className="block">2024-06-28</span>
        </button>
        <button aria-label="알림" className="flex w-[100px] justify-center">
          <span className="relative block">
            <svg viewBox="0 0 34 34" className="mr-3 size-[34px]" aria-hidden="true">
              <path d="M1 1h32v25H19l-6 7v-7H1z" fill="#fff" />
              <path d="M6 8h22M6 14h22M6 20h22" stroke="#10151f" strokeWidth="2" />
            </svg>
            <span className="absolute -right-1 -bottom-4 flex size-[34px] items-center justify-center rounded-full border-2 border-[#77797d] bg-[#1c1d20] text-2xl leading-none font-semibold">
              1
            </span>
          </span>
        </button>
        <span className="h-20 w-2.5 border-l-2 border-[#5d6472]" />
      </div>
    </footer>
  );
}

/* ---------- page ---------- */

export default function App() {
  return (
    <div className="flex min-h-screen flex-col bg-white px-28 pt-[76px] pb-[148px]">
      <div className="relative flex flex-1 flex-col overflow-hidden rounded-[20px] shadow-[0_0_0_1px_#000,0_36px_90px_4px_rgba(0,0,0,0.62)]">
        <HostTitleBar />
        <div className={`relative flex flex-1 flex-col ${UI}`}>
          <TabStrip />
          <BrowserToolbar />
          <VCenterPage />
          <ConsoleWindow />
          <ExplorerWindow />
          <PropertiesDialog />
          <div className="absolute right-[117px] bottom-[152px] text-[#757e83]">
            <p className="mb-1 text-[42px] leading-[46px]">Windows 정품 인증</p>
            <p className="text-[32px] leading-10">[설정]으로 이동하여 Windows를 정품 인증합니다.</p>
          </div>
          <Taskbar />
        </div>
        <div className="pointer-events-none absolute inset-0 rounded-[20px] border-2 border-white/25" />
      </div>
    </div>
  );
}
